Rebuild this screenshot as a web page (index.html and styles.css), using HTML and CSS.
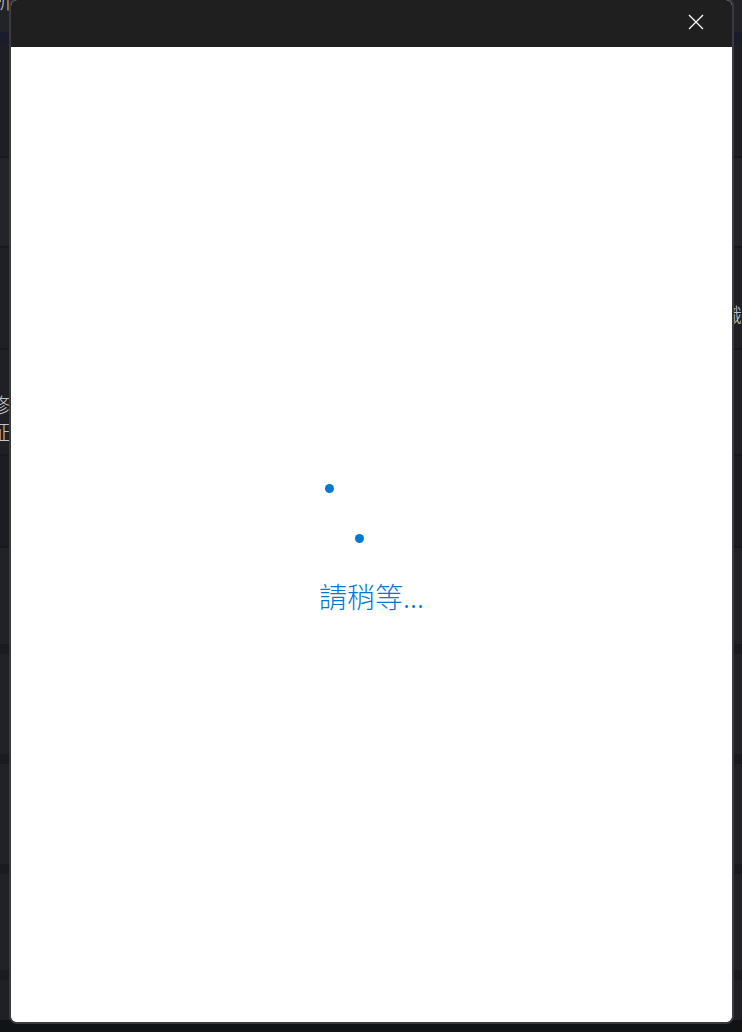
FILE: index.html
```html
<!DOCTYPE html>
<html lang="zh-Hant">
<head>
<meta charset="utf-8">
<title>請稍等</title>
<link rel="stylesheet" href="styles.css">
</head>
<body>
<div class="page">
  <div class="row r0"><span class="bgtext t-left0">場所</span></div>
  <div class="row band"></div>
  <div class="row r1"></div>
  <div class="row r2"></div>
  <div class="row r3"><span class="bgtext t-right">識</span></div>
  <div class="row r4"><span class="bgtext t-left">修</span><span class="bgtext t-left2">証</span></div>
  <div class="row r5"></div>
  <div class="row r6"></div>
  <div class="row r7"></div>
  <div class="row r8"></div>
  <div class="row r9"></div>
  <div class="row r10"></div>
</div>

<div class="dialog" role="dialog" aria-label="請稍等">
  <div class="dialog-header">
    <button class="close" aria-label="關閉">
      <svg width="16" height="16" viewBox="0 0 16 16"><path d="M1 1 L15 15 M15 1 L1 15" stroke="#ffffff" stroke-width="1.3" fill="none"/></svg>
    </button>
  </div>
  <div class="dialog-body">
    <div class="spinner">
      <span class="dot d1"></span>
      <span class="dot d2"></span>
    </div>
    <div class="wait">請稍等...</div>
  </div>
</div>
</body>
</html>
```

FILE: styles.css
```css
html, body {
  margin: 0;
  padding: 0;
}
body {
  width: 742px;
  height: 1032px;
  overflow: hidden;
  background: #111316;
  font-family: "Noto Sans CJK TC", "Noto Sans", sans-serif;
  position: relative;
}
.page {
  display: flex;
  flex-direction: column;
}
.row {
  position: relative;
  background: #1e1f24;
  border-bottom: 2px solid #18191d;
  overflow: hidden;
}
.r0 { height: 32px; background: #222327; border-bottom: none; }
.band { height: 12px; background: #1b1c2b; border-bottom: none; }
.r1 { height: 112px; background: #1e1f24; }
.r2 { height: 88px; background: #232428; }
.r3 { height: 100px; background: #1f2025; }
.r4 { height: 104px; background: #1f2025; }
.r5 { height: 90px; background: #1c1d22; }
.r6 { height: 96px; background: #212227; border-bottom: 10px solid #1a1b1f; }
.r7 { height: 100px; background: #212227; border-bottom: 10px solid #1a1b1f; }
.r8 { height: 100px; background: #212227; border-bottom: 10px solid #1a1b1f; }
.r9 { height: 96px; background: #212227; border-bottom: 10px solid #1a1b1f; }
.r10 { height: 40px; background: #1f2025; border-bottom: none; }

.bgtext {
  position: absolute;
  color: #c4c5c8;
  font-size: 20px;
  font-weight: 300;
  line-height: 26px;
}
.t-left0 { left: -28px; top: -12px; }
.t-left { left: -10px; top: 42px; }
.t-left2 { left: -10px; top: 69px; }
.t-right { right: 0; top: 54px; }

.dialog {
  position: absolute;
  left: 9px;
  top: -2px;
  width: 721px;
  height: 1022px;
  border: 2px solid #3a3b3f;
  border-radius: 8px;
  background: #ffffff;
  overflow: hidden;
  display: flex;
  flex-direction: column;
}
.dialog-header {
  height: 47px;
  flex: none;
  background: #1f1f1f;
  display: flex;
  justify-content: flex-end;
  align-items: flex-start;
  padding-right: 20px;
  padding-top: 6px;
  box-sizing: border-box;
}
.close {
  width: 32px;
  height: 32px;
  border: none;
  background: transparent;
  padding: 0;
  display: flex;
  align-items: center;
  justify-content: center;
  cursor: pointer;
}
.dialog-body {
  flex: 1;
  background: #ffffff;
  border-radius: 0 0 6px 6px;
  display: flex;
  flex-direction: column;
  align-items: center;
  padding-top: 433px;
}
.spinner {
  position: relative;
  width: 80px;
  height: 80px;
  margin-right: 22px;
}
.dot {
  position: absolute;
  width: 9px;
  height: 9px;
  border-radius: 50%;
  background: #0078d4;
}
.d1 { left: 4px; top: 4px; }
.d2 { left: 34px; top: 54px; }
.wait {
  margin-top: 16px;
  color: #0078d4;
  font-size: 28px;
  font-weight: 300;
  line-height: 40px;
}
```
